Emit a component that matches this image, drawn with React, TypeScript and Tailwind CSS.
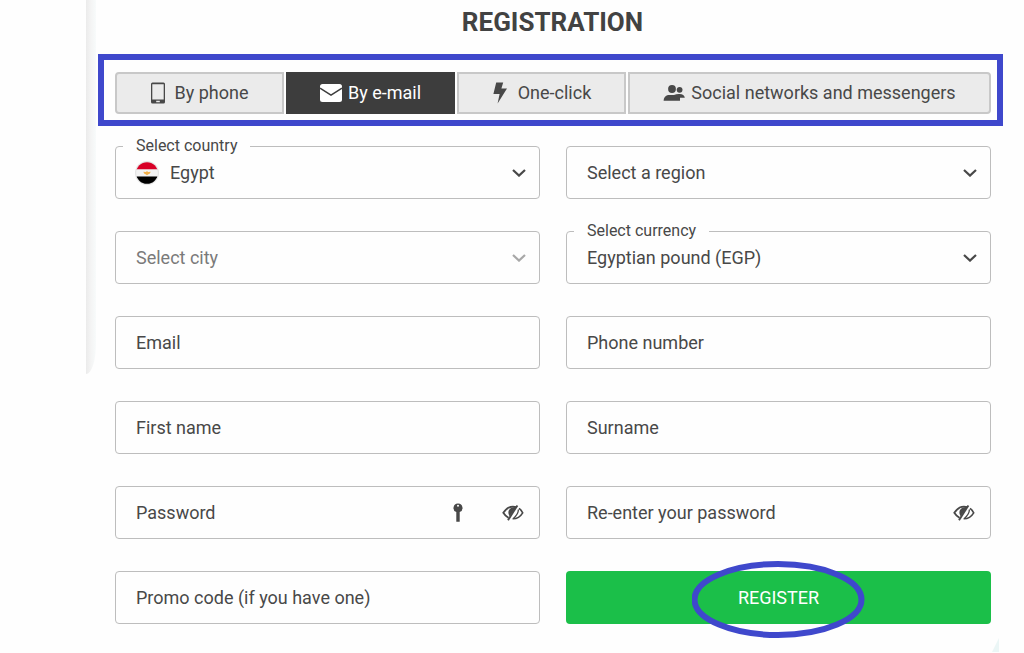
import React, { useState } from 'react';

type IconProps = { className?: string };

const PhoneIcon = () => (
    <svg width="14" height="22" viewBox="0 0 14 22" fill="currentColor" aria-hidden="true">
        <path fillRule="evenodd" d="M1.5 0.5h11a1.5 1.5 0 0 1 1.5 1.5v18a1.5 1.5 0 0 1-1.5 1.5h-11a1.5 1.5 0 0 1-1.5-1.5v-18a1.5 1.5 0 0 1 1.5-1.5zM1.3 2.3v15.2h11.4v-15.2zM5.2 18.8v1.4h3.6v-1.4z" />
    </svg>
);

const MailIcon = () => (
    <svg width="22" height="18" viewBox="0 0 22 18" aria-hidden="true">
        <rect width="22" height="18" rx="2.5" fill="currentColor" />
        <path d="M0 4.2L11 11.2L22 4.2" fill="none" stroke="#3d3d3d" strokeWidth="1.5" />
    </svg>
);

const BoltIcon = () => (
    <svg width="16" height="22" viewBox="0 0 16 22" fill="currentColor" aria-hidden="true">
        <path d="M4.2 0.5H11.2L9.4 6.4H15L5.6 21.5L7.6 12H1.4z" />
    </svg>
);

const PeopleIcon = () => (
    <svg width="22" height="16" viewBox="0 0 22 16" fill="currentColor" aria-hidden="true">
        <circle cx="9" cy="4" r="3.9" />
        <circle cx="16.6" cy="4.8" r="2.9" />
        <path d="M0.6 15.8C0.6 12.6 2.4 10.6 5 10H11C12.6 9.2 14.4 8.8 16.5 8.9C19.6 9 21.6 10.4 21.8 12.8H17V15.8z" />
    </svg>
);

const ChevronIcon = ({ className }: IconProps) => (
    <svg className={className} width="14" height="8" viewBox="0 0 14 8" fill="none" stroke="currentColor" strokeWidth="2.2" aria-hidden="true">
        <path d="M1 1L7 6.6L13 1" />
    </svg>
);

const KeyIcon = () => (
    <svg width="10" height="20" viewBox="0 0 10 20" fill="currentColor" aria-hidden="true">
        <path fillRule="evenodd" d="M5 0.6a4.4 4.4 0 0 1 1.7 8.5V18.8H3.3V9.1A4.4 4.4 0 0 1 5 0.6zM5 1.8a1 1 0 1 0 0 2a1 1 0 0 0 0-2z" />
    </svg>
);

const EyeOffIcon = () => (
    <svg width="22" height="18" viewBox="0 0 22 18" fill="none" stroke="currentColor" aria-hidden="true">
        <path d="M14.6 3.2C9.4 1.6 4.4 4 1.3 8.8C2.8 11.2 4.6 12.9 6.6 13.9" strokeWidth="1.8" />
        <path d="M14.2 3.2C10.4 2.6 6.6 4.6 6.4 8.2C6.3 9.9 6.9 11.2 7.8 12.3z" fill="currentColor" stroke="none" />
        <path d="M15.4 1.4L6 16.2" strokeWidth="1.9" />
        <path d="M17 4.4C18.5 5.4 19.7 6.9 20.7 8.8C18.4 12.6 14.8 14.8 10.6 14.7" strokeWidth="1.6" />
        <path d="M16.4 5.6C16.4 9 14.8 11.6 11.4 14.4" strokeWidth="1.3" />
    </svg>
);

const EgyptFlag = () => (
    <svg className="shrink-0" width="24" height="24" viewBox="0 0 24 24" aria-hidden="true">
        <clipPath id="flag-clip">
            <circle cx="12" cy="12" r="10.8" />
        </clipPath>
        <circle cx="12" cy="12" r="12" fill="#e4e4e4" />
        <g clipPath="url(#flag-clip)">
            <rect width="24" height="8.5" fill="#d80027" />
            <rect y="8.5" width="24" height="7" fill="#f3f3f3" />
            <rect y="15.5" width="24" height="9" fill="#000" />
        </g>
        <path d="M8.2 10.8L11 11L12 10L13 11L15.8 10.8L14.6 12.8L13.4 13.2L12 14.2L10.6 13.2L9.4 12.8z" fill="#f2b04a" />
    </svg>
);

const tabs = [
    { id: 'phone', text: 'By phone', icon: <PhoneIcon />, gap: 'gap-[10px]', round: 'rounded-l' },
    { id: 'email', text: 'By e-mail', icon: <MailIcon />, gap: 'gap-[6px]', round: '' },
    { id: 'click', text: 'One-click', icon: <BoltIcon />, gap: 'gap-[10px]', round: '' },
    { id: 'social', text: 'Social networks and messengers', icon: <PeopleIcon />, gap: 'gap-[6px]', round: 'rounded-r' }
];

const box = 'relative flex h-[53px] items-center rounded border border-[#bdbdbd]';

function SelectField({ id, label, options, floating, disabled, icon }: {
    id: string;
    label: string;
    options: string[];
    floating?: boolean;
    disabled?: boolean;
    icon?: React.ReactNode;
}) {
    return (
        <div className={box}>
            {floating && (
                <label htmlFor={id} className="absolute -top-[11px] left-[7px] bg-[#fefefe] px-[13px] text-[16px] leading-5">
                    {label}
                </label>
            )}
            {icon && <span className="pl-[19px]">{icon}</span>}
            <select
                id={id}
                aria-label={floating ? undefined : label}
                disabled={disabled}
                className={`h-full min-w-0 flex-1 appearance-none bg-transparent pr-10 outline-none ${icon ? 'pl-[11px]' : 'pl-5'} ${disabled ? 'text-[#7a7a7a] opacity-100' : ''}`}
            >
                {options.map((o) => <option key={o}>{o}</option>)}
            </select>
            <ChevronIcon className={`pointer-events-none absolute right-[13px] ${disabled ? 'text-[#a8a8a8]' : ''}`} />
        </div>
    );
}

function TextField({ label, type = 'text', children }: { label: string; type?: string; children?: React.ReactNode }) {
    return (
        <div className={`${box} pr-[15px]`}>
            <input
                type={type}
                aria-label={label}
                placeholder={label}
                className="h-full min-w-0 flex-1 bg-transparent pl-5 outline-none placeholder:text-[#484848]"
            />
            {children}
        </div>
    );
}

export default function App() {
    const [tab, setTab] = useState('email');
    const [showFirst, setShowFirst] = useState(false);
    const [showSecond, setShowSecond] = useState(false);

    return (
        <div className="flex min-h-screen items-start bg-[#fefefe] pl-[86px] font-['Roboto',sans-serif] text-[18px] leading-6 text-[#484848]">
            {/* Edge of the panel next to the form */}
            <div className="h-[374px] w-[10px] shrink-0 rounded-br-[10px_30px] bg-linear-to-r from-[#ebebeb] via-[#f4f4f4] to-[#f8fbfb]" />

            <main className="min-w-0 flex-1 pr-[21px] pl-[2px]">
                <h1 className="pt-[6px] pb-4 pl-1 text-center text-[26px] leading-8 font-bold text-[#424242]">REGISTRATION</h1>

                <div className="grid grid-cols-[169fr_169fr_169fr_363fr] gap-[2px] border-6 border-[#3f48cc] pt-3 pr-[6px] pb-[6px] pl-[11px]">
                    {tabs.map((t) => (
                        <button
                            key={t.id}
                            type="button"
                            onClick={() => setTab(t.id)}
                            className={`flex h-[42px] items-center justify-center border-2 whitespace-nowrap ${t.gap} ${t.round} ${tab === t.id ? 'border-[#3d3d3d] bg-[#3d3d3d] text-white' : 'border-[#c8c8c8] bg-[#ebebeb]'}`}
                        >
                            {t.icon}
                            {t.text}
                        </button>
                    ))}
                </div>

                <form
                    onSubmit={(e) => e.preventDefault()}
                    className="grid grid-cols-2 gap-x-[26px] gap-y-8 pt-5 pr-3 pl-[17px]"
                >
                    <SelectField id="country" label="Select country" options={['Egypt']} floating icon={<EgyptFlag />} />
                    <SelectField id="region" label="Region" options={['Select a region']} />
                    <SelectField id="city" label="City" options={['Select city']} disabled />
                    <SelectField id="currency" label="Select currency" options={['Egyptian pound (EGP)']} floating />
                    <TextField label="Email" type="email" />
                    <TextField label="Phone number" type="tel" />
                    <TextField label="First name" />
                    <TextField label="Surname" />
                    <TextField label="Password" type={showFirst ? 'text' : 'password'}>
                        <button type="button" aria-label="Generate password" className="mr-[39px]">
                            <KeyIcon />
                        </button>
                        <button type="button" aria-label="Show password" onClick={() => setShowFirst(!showFirst)}>
                            <EyeOffIcon />
                        </button>
                    </TextField>
                    <TextField label="Re-enter your password" type={showSecond ? 'text' : 'password'}>
                        <button type="button" aria-label="Show password" onClick={() => setShowSecond(!showSecond)}>
                            <EyeOffIcon />
                        </button>
                    </TextField>
                    <TextField label="Promo code (if you have one)" />
                    <button type="submit" className="relative h-[53px] rounded bg-[#1bbf49] text-white">
                        REGISTER
                        <svg
                            className="pointer-events-none absolute -top-[10px] left-1/2 -translate-x-1/2"
                            width="174"
                            height="78"
                            viewBox="0 0 174 78"
                            fill="none"
                            stroke="#3f48cc"
                            strokeWidth="6"
                            aria-hidden="true"
                        >
                            <ellipse cx="86" cy="38.5" rx="83.5" ry="35.5" />
                        </svg>
                    </button>
                </form>

                <div className="flex justify-end pt-[14px] pr-1">
                    <svg width="7" height="14" viewBox="0 0 7 14" aria-hidden="true">
                        <path d="M0 14L7 0V14z" fill="#ebf6f6" />
                    </svg>
                </div>
            </main>
        </div>
    );
}
